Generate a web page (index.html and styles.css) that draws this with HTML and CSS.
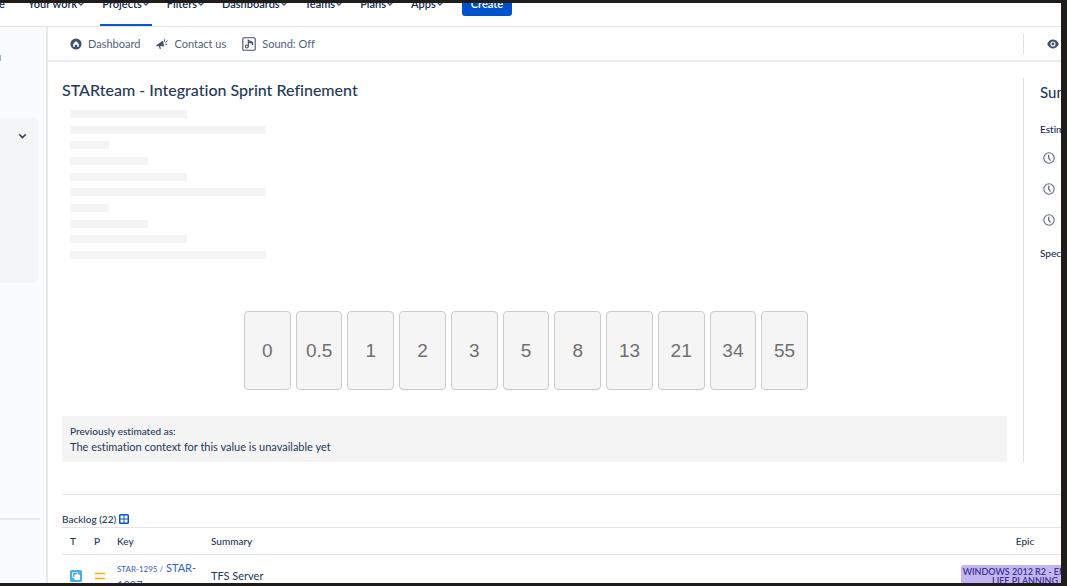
FILE: index.html
```html
<!DOCTYPE html>
<html lang="en">
<head>
<meta charset="utf-8">
<title>STARteam - Integration Sprint Refinement</title>
<link rel="stylesheet" href="styles.css">
</head>
<body>
<svg class="defs" aria-hidden="true">
  <symbol id="chevron" viewBox="0 0 8 8"><path d="M1.500 2.500 4 5l2.500-2.500" fill="none" stroke="currentColor" stroke-width="1.400" stroke-linecap="round"/></symbol>
  <symbol id="clock" viewBox="0 0 12 12"><circle cx="6" cy="6" r="5.200" fill="none" stroke="currentColor" stroke-width="1.100"/><path d="M5.700 2.800v3.300l1.800 2.500" fill="none" stroke="currentColor" stroke-width="1.300"/></symbol>
</svg>
<header class="topnav">
  <a class="brand" href="#">e</a>
  <nav class="menu">
    <button class="menu-item">Your work<svg class="chev"><use href="#chevron"/></svg></button>
    <button class="menu-item active">Projects<svg class="chev"><use href="#chevron"/></svg></button>
    <button class="menu-item">Filters<svg class="chev"><use href="#chevron"/></svg></button>
    <button class="menu-item">Dashboards<svg class="chev"><use href="#chevron"/></svg></button>
    <button class="menu-item">Teams<svg class="chev"><use href="#chevron"/></svg></button>
    <button class="menu-item">Plans<svg class="chev"><use href="#chevron"/></svg></button>
    <button class="menu-item">Apps<svg class="chev"><use href="#chevron"/></svg></button>
    <button class="create">Create</button>
  </nav>
</header>
<div class="layout">
  <aside class="sidebar">
    <div class="avatar"></div>
    <div class="group"><button class="expand" aria-label="Collapse group"><svg class="chev-lg"><use href="#chevron"/></svg></button></div>
    <div class="side-foot"></div>
  </aside>
  <main class="content">
    <div class="toolbar">
      <a class="tool" href="#"><svg class="icon" viewBox="0 0 12 12"><circle cx="6" cy="6" r="5.600" fill="#42526e"/><path d="M3.200 6 6 3 8.800 6v2.800H7.200V6.800H4.800v2H3.200Z" fill="#fff"/></svg>Dashboard</a>
      <a class="tool" href="#"><svg class="icon" viewBox="0 0 12 12"><path d="M.3 7.200 7 2.400l1.200 6.200-4-.5.700 3H3.700L2.700 8.100.6 8.300Z" fill="#42526e"/><path d="M8.300 3.600l.4-2.400M9.400 4.400l2-1.800M9.300 6.200l2 .1" stroke="#42526e" fill="none"/></svg>Contact us</a>
      <button class="tool"><svg class="icon-md" viewBox="0 0 14 14"><rect x=".8" y=".8" width="12.400" height="12.400" rx="1" fill="none" stroke="#42526e" stroke-width="1.100"/><path d="M6.300 9.500V3.400c1 1 3.600.6 4.300 2v2.500M6.300 5c1.200.9 3 .4 4.300 1.500" fill="none" stroke="#42526e" stroke-width="1.100"/><circle cx="4.800" cy="9.500" r="1.500" fill="none" stroke="#42526e" stroke-width="1.100"/></svg>Sound: Off</button>
      <button class="watch" aria-label="Watch"><svg class="icon" viewBox="0 0 12 12"><path d="M.2 6C1.400 3 3.600 1.600 6 1.600S10.600 3 11.800 6C10.600 9 8.400 10.400 6 10.400S1.400 9 .2 6Z" fill="#42526e"/><circle cx="6" cy="6" r="2" fill="none" stroke="#fff" stroke-width="1.100"/></svg></button>
    </div>
    <div class="session">
      <section class="estimate">
        <h1>STARteam - Integration Sprint Refinement</h1>
        <div class="skeleton"><i class="w3"></i><i class="w5"></i><i class="w1"></i><i class="w2"></i><i class="w3"></i><i class="w5"></i><i class="w1"></i><i class="w2"></i><i class="w3"></i><i class="w5"></i></div>
        <div class="cards">
          <button>0</button><button>0.5</button><button>1</button><button>2</button><button>3</button><button>5</button><button>8</button><button>13</button><button>21</button><button>34</button><button>55</button>
        </div>
        <div class="previous"><strong>Previously estimated as:</strong><p>The estimation context for this value is unavailable yet</p></div>
      </section>
      <aside class="summary">
        <h2>Summary</h2>
        <h3>Estimators</h3>
        <ul><li><svg class="icon"><use href="#clock"/></svg></li><li><svg class="icon"><use href="#clock"/></svg></li><li><svg class="icon"><use href="#clock"/></svg></li></ul>
        <h3>Spectators</h3>
      </aside>
    </div>
    <section class="backlog">
      <div class="backlog-head"><h3>Backlog (22)</h3><button class="grid-btn" aria-label="Table view"><svg viewBox="0 0 10 10"><rect width="10" height="10" rx="1.500" fill="#0c55cc"/><path d="M1.500 1.500h3v3h-3zM5.500 1.500h3v3h-3zM1.500 5.500h3v3h-3zM5.500 5.500h3v3h-3z" fill="#fff"/></svg></button></div>
      <table>
        <colgroup><col class="c-type"><col class="c-priority"><col class="c-key"><col><col class="c-epic"></colgroup>
        <thead><tr><th>T</th><th>P</th><th>Key</th><th>Summary</th><th class="epic-col">Epic</th></tr></thead>
        <tbody><tr>
          <td><svg class="icon" viewBox="0 0 12 12"><rect width="12" height="12" rx="1.500" fill="#4bade8"/><rect x="2.500" y="2.500" width="5" height="5" rx=".8" fill="none" stroke="#fff"/><rect x="4.500" y="4.500" width="5.500" height="5.500" rx=".8" fill="#fff"/></svg></td>
          <td><svg class="icon" viewBox="0 0 12 12"><path d="M1.500 3.600h9M1.500 8.400h9" stroke="#ffab00" stroke-width="1.500" stroke-linecap="round"/></svg></td>
          <td class="key"><a class="parent" href="#">STAR-1295 /</a> <a href="#">STAR-<wbr>1297</a></td>
          <td class="name">TFS Server</td>
          <td class="epic-col"><a class="lozenge" href="#">WINDOWS 2012 R2 - END OF LIFE PLANNING</a></td>
        </tr></tbody>
      </table>
    </section>
  </main>
</div>
</body>
</html>
```
FILE: styles.css
```css
* { box-sizing: border-box; margin: 0; padding: 0; }
html { height: 100%; }
body {
  height: 100%;
  display: flex;
  flex-direction: column;
  overflow: hidden;
  border: solid #1f1d1c;
  border-width: 3px 6px 3px 0;
  background: #fff;
  color: #253858;
  font: 11px/16px Lato, "Open Sans", sans-serif;
  font-variant-ligatures: none;
}
button { border: 0; background: none; font: inherit; color: inherit; }
a { color: inherit; text-decoration: none; }
svg { display: block; }
.defs { display: none; }
.icon { width: 12px; height: 12px; flex: none; }
.icon-md { width: 14px; height: 14px; flex: none; }

.topnav {
  flex: none;
  height: 24px;
  display: flex;
  align-items: flex-end;
  overflow: hidden;
  border-bottom: 1px solid #e3e4e8;
  color: #172b4d;
  font-weight: 600;
}
.brand { width: 27px; height: 44px; line-height: 44px; margin-left: -1px; }
.menu { display: flex; align-items: center; height: 44px; gap: 13px; }
.menu-item { display: flex; align-items: center; height: 44px; padding: 0 2px; border-bottom: 2px solid transparent; border-top: 2px solid transparent; }
.menu-item.active { border-bottom-color: #0c55cc; }
.chev { width: 8px; height: 8px; color: #42526e; }
.create { height: 24px; padding: 0 9px; margin-left: 3px; border-radius: 3px; background: #0052cc; color: #fff; }

.layout { flex: 1; min-height: 0; display: flex; }
.sidebar { flex: none; width: 48px; background: #fafbfc; border-right: 2px solid #e9eaed; }
.avatar { width: 1px; height: 6px; margin-top: 28px; background: #8fb3e0; }
.group { width: 38px; height: 165px; margin-top: 57px; padding: 14px 11px; border-radius: 0 5px 5px 0; background: #f4f5f7; display: flex; justify-content: flex-end; align-items: flex-start; }
.chev-lg { width: 9px; height: 9px; color: #344563; }
.side-foot { width: 40px; height: 237px; border-bottom: 2px solid #e6e8eb; }

.content { flex: 1; min-width: 0; overflow: hidden; }
.toolbar { display: flex; align-items: center; height: 35px; padding-left: 22px; gap: 16px; border-bottom: 2px solid #ebecf0; color: #505f79; }
.tool { display: flex; align-items: center; gap: 6px; white-space: nowrap; }
.watch { width: 38px; height: 20px; margin-left: auto; display: flex; align-items: center; justify-content: flex-end; padding-right: 2px; border-left: 1px solid #dfe1e6; }

.session { display: flex; margin: 16px 0 0 14px; }
.estimate { flex: 1; min-width: 0; padding-right: 16px; }
h1 { font-size: 16px; line-height: 24px; font-weight: 500; color: #253858; }
.skeleton { display: flex; flex-direction: column; justify-content: space-between; height: 149px; margin: 8px 0 0 8px; }
.skeleton i { height: 8px; background: #f4f4f4; }
.w1 { width: 39px; }
.w2 { width: 78px; }
.w3 { width: 117px; }
.w5 { width: 196px; }
.cards { display: grid; grid-template-columns: repeat(11, 1fr); gap: 5px; width: 100%; max-width: 581px; margin: 52px auto 26px; padding-right: 17px; }
.cards button { height: 79px; border: 1px solid #ccc; border-radius: 4px; background: #f5f5f5; color: #707070; font: 19px "Liberation Sans", sans-serif; }
.previous { padding: 8px; background: #f4f4f4; line-height: 15px; }
.previous strong { display: block; font-size: 10px; font-weight: 500; }
.summary { flex: none; width: 38px; padding: 2px 0 0 16px; border-left: 1px solid #dfe1e6; overflow: hidden; white-space: nowrap; }
h2 { font-size: 15px; line-height: 24px; font-weight: 500; }
h3 { font-size: 10px; line-height: 16px; font-weight: 500; }
.summary h3 { margin-top: 17px; color: #172b4d; }
.summary ul { list-style: none; display: grid; gap: 19px; padding: 15px 0 2px 3px; color: #5e6c84; }

.backlog { margin: 32px 0 0 14px; padding-top: 16px; border-top: 1px solid #dfe1e6; }
.backlog-head { display: flex; align-items: center; gap: 3px; height: 16px; }
.grid-btn svg { width: 10px; height: 10px; }
table { width: calc(100% + 36px); table-layout: fixed; border-collapse: collapse; }
.c-type { width: 24px; }
.c-priority { width: 23px; }
.c-key { width: 94px; }
.c-epic { width: 144px; }
thead tr { border: solid #e1e3e8; border-width: 1px 0; }
th { height: 27px; padding-left: 8px; text-align: left; font-size: 10px; font-weight: 500; }
td { height: 42px; padding: 0 0 0 8px; vertical-align: middle; }
.key { padding-right: 4px; line-height: 15px; color: #2f62c4; }
.parent { font-size: 8px; }
.epic-col { padding: 0 8px; text-align: center; }
.lozenge { display: block; padding: 2px 1px; border-radius: 3px; background: #c0b6f2; color: #403294; font-size: 9px; line-height: 9px; font-weight: 600; }
```
